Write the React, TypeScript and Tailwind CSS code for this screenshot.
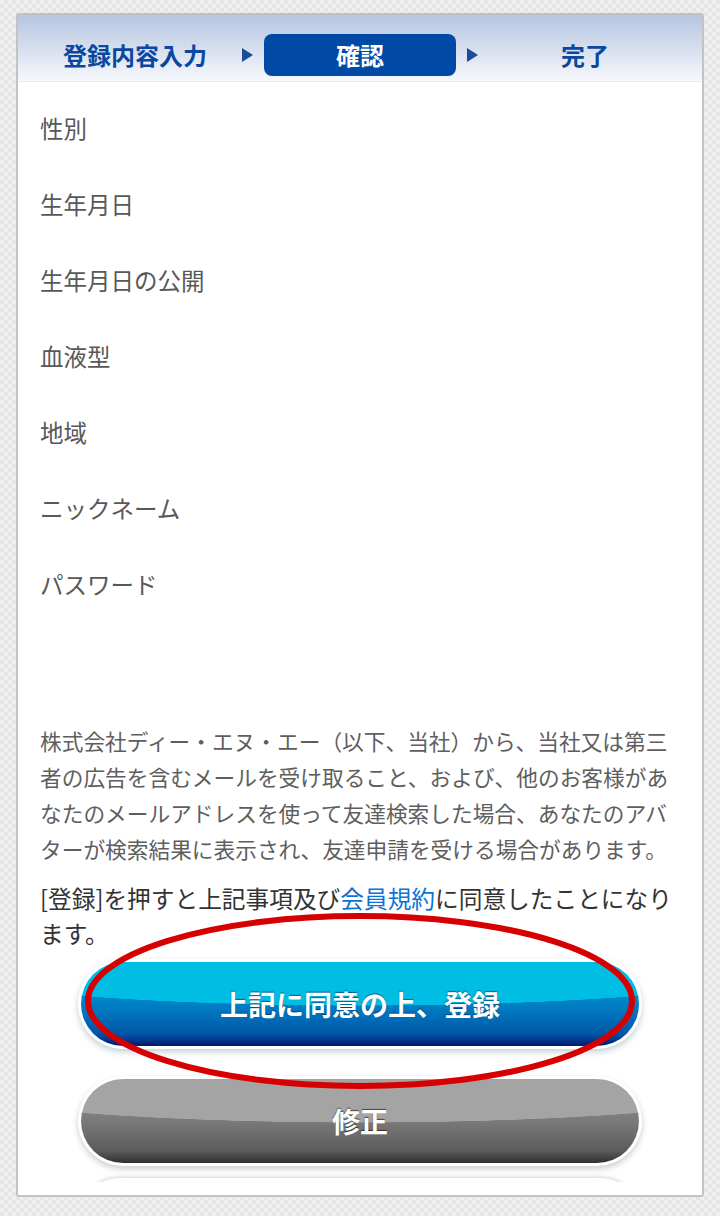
const labels = ["性別", "生年月日", "生年月日の公開", "血液型", "地域", "ニックネーム", "パスワード"];

const notice = [
  "株式会社ディー・エヌ・エー（以下、当社）から、当社又は第三",
  "者の広告を含むメールを受け取ること、および、他のお客様があ",
  "なたのメールアドレスを使って友達検索した場合、あなたのアバ",
  "ターが検索結果に表示され、友達申請を受ける場合があります。",
];

const Arrow = () => (
  <div className="flex items-center justify-center">
    <div className="w-0 h-0 border-y-[7px] border-y-transparent border-l-[11px] border-l-[#1a4c9e]" />
  </div>
);

const App = () => {
  return (
    <div
      className="min-h-[1216px] w-[720px] pt-[13px] px-[16px] bg-[#ebebeb] bg-[repeating-conic-gradient(#e5e5e5_0_25%,#efefef_0_50%)] bg-[length:8px_8px]"
      style={{ fontFamily: '"Noto Sans CJK JP", "Noto Sans", sans-serif' }}
    >
      <div className="h-[1184px] flex flex-col bg-white border-2 border-[#c3c3c3] rounded-[3px] pb-[13px] overflow-hidden">
        {/* Steps */}
        <div className="h-[67px] shrink-0 border-b border-[#e7e9ee] bg-gradient-to-b from-[#b6c5e0] to-[#f6f8fc] px-[21px] pt-[19px]">
          <div className="grid grid-cols-[192px_33px_192px_33px_192px] h-[42px] text-[24px] font-bold leading-none">
            <div className="flex items-center justify-center text-[#0a47a0]">登録内容入力</div>
            <Arrow />
            <div className="flex items-center justify-center rounded-[8px] bg-[#0049a5] text-white">確認</div>
            <Arrow />
            <div className="flex items-center justify-center text-[#0a47a0]">完了</div>
          </div>
        </div>

        <div className="flex-1 min-h-0 overflow-hidden pt-[9px]">
          {/* Labels */}
          <div className="px-[22px]">
            {labels.map((label) => (
              <div key={label} className="h-[76px] flex items-center text-[23.5px] text-[#585858]">
                {label}
              </div>
            ))}
          </div>

          {/* Notice */}
          <div className="px-[22px] mt-[100px] leading-[36px]">
            <p className="text-[21.7px] text-[#5e5e5e]">
              {notice.map((line) => (
                <span key={line} className="block whitespace-nowrap">
                  {line}
                </span>
              ))}
            </p>
            <p className="mt-[14px] text-[23.7px] leading-[35px] text-[#333]">
              <span className="block whitespace-nowrap">
                [登録]を押すと上記事項及び<span className="text-[#0a72d8]">会員規約</span>に同意したことになり
              </span>
              <span className="block">ます。</span>
            </p>
          </div>

          {/* Buttons */}
          <div className="mt-[8px] flex flex-col items-center">
            <div className="relative">
              <div className="w-[564px] rounded-full bg-white p-[3px] shadow-[0_3px_6px_rgba(20,70,110,0.25)]">
                <button className="w-full h-[84px] rounded-full bg-[radial-gradient(ellipse_80%_52%_at_50%_0%,#00bde3_99%,transparent_100%),linear-gradient(to_bottom,#00a6da,#0080c6_50%,#0058a8_85%,#002a80_96%,#0a1666)] text-white text-[28px] font-bold [text-shadow:0_-1px_1px_rgba(0,30,80,0.6)]">
                  上記に同意の上、登録
                </button>
              </div>
              <svg
                className="absolute left-[6px] top-[-47px] pointer-events-none"
                width="552"
                height="178"
                viewBox="0 0 552 178"
              >
                <ellipse cx="276" cy="89" rx="272" ry="85" fill="none" stroke="#d70000" strokeWidth="6" />
              </svg>
            </div>

            <div className="mt-[27px] w-[564px] rounded-full bg-white p-[3px] shadow-[0_3px_6px_rgba(0,0,0,0.2)]">
              <button className="w-full h-[84px] rounded-full bg-[radial-gradient(ellipse_80%_52%_at_50%_0%,#a4a4a4_99%,transparent_100%),linear-gradient(to_bottom,#8e8e8e,#7a7a7a_50%,#5c5c5c_85%,#3c3c3c_96%,#2e2e2e)] text-white text-[28px] font-bold [text-shadow:0_-1px_1px_rgba(0,0,0,0.6)]">
                修正
              </button>
            </div>

            <div className="mt-[12px] w-[564px] h-[84px] rounded-full bg-white shadow-[0_-1px_4px_rgba(0,0,0,0.18)]" />
          </div>
        </div>
      </div>
    </div>
  );
};

export default App;
